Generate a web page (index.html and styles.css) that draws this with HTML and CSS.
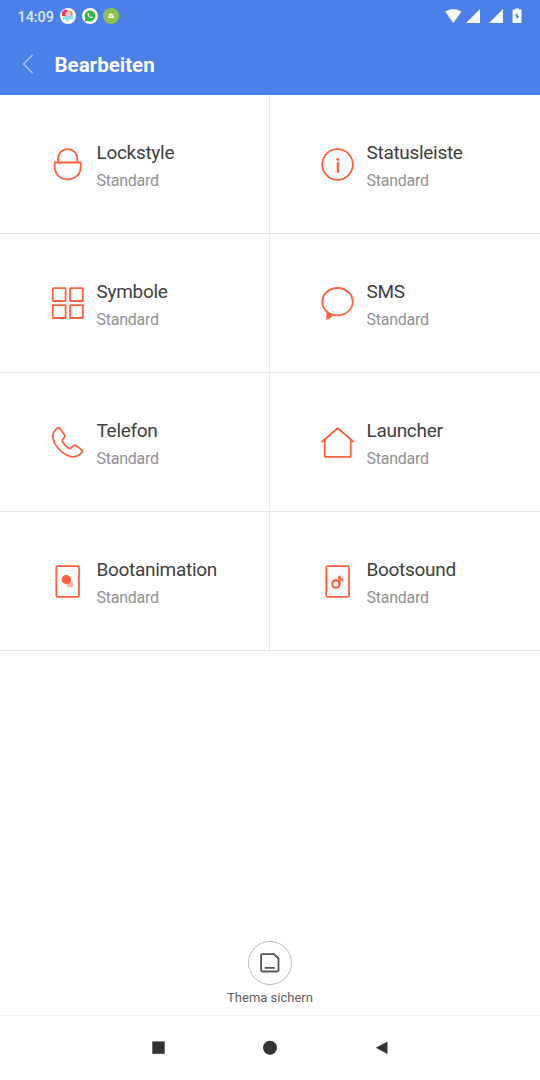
FILE: index.html
```html
<!DOCTYPE html>
<html lang="de">
<head>
  <meta charset="UTF-8" />
  <meta name="viewport" content="width=device-width, initial-scale=1.0"/>
  <title>Bearbeiten</title>
  <link rel="stylesheet" href="styles.css">
</head>
<body>
  <header>
    <div class="statusbar">
      <span class="time">14:09</span>
      <svg class="notif" viewBox="0 0 16 16">
        <circle cx="8" cy="8" r="8" fill="#fff"/>
        <path d="M2 3.500 5 1.500 8 2.200 5.500 8H2z" fill="#e8354f"/>
        <path d="M8 2.200 12 2.600 14 6.500 10 6z" fill="#f5dc9c"/>
        <path d="M6 3.500h6v4.500l-3 2-4-3z" fill="#ee8c8c"/>
        <path d="M3 9l3-1 3 1 4-3v5l-4 1-2 2-1-2.500H3z" fill="#7fe3ef"/>
        <circle cx="8" cy="6.200" r="2.400" fill="#f4cfcb"/>
      </svg>
      <svg class="notif" viewBox="0 0 16 16">
        <circle cx="8" cy="8" r="8" fill="#fff"/>
        <path d="M2.400 13.600l.9-3.100A5.400 5.400 0 1 1 5.500 12.700z" fill="#2db742"/>
        <path d="M6.100 5.100c-1.200 1-.3 2.700.9 3.900s2.800 2 3.800.8l.1-.7-1.500-.8-.8.7c-.8-.3-1.500-1-1.800-1.700l.6-.8-.7-1.500z" fill="#fff"/>
      </svg>
      <svg class="notif" viewBox="0 0 16 16">
        <circle cx="8" cy="8" r="8" fill="#8bc34a"/>
        <path d="M5.400 7.500a2.600 2 0 0 1 5.200 0zM5.200 8.200h5.600v1.700H5.200z" fill="#fff"/>
      </svg>
      <svg class="system" viewBox="0 0 78 16">
        <path d="M0 3.600Q8.300-1.500 16.600 3.600L8.300 15z"/>
        <path d="M35 1v14H21z"/>
        <path d="M58 1v14H44z"/>
        <path d="M68 1.500h2V.6h4v.9h2q.5 0 .5.500v12.500q0 .5-.5.500h-8q-.5 0-.5-.5V2q0-.5.500-.5z"/>
        <path d="M72.400 4.500l-2.700 4h1.900v3.300l2.700-4h-1.900z" fill="#4a80e8"/>
      </svg>
    </div>
    <div class="titlebar">
      <svg class="back" viewBox="0 0 12 20"><path d="M10.500 1 1.500 10l9 9"/></svg>
      <h1>Bearbeiten</h1>
    </div>
  </header>

  <main>
    <div class="item">
      <svg viewBox="0 0 35 35">
        <path d="M8 15.300v-3.500a9.700 9.700 0 0 1 19.400 0v3.500"/>
        <path d="M4.700 15.500h26v4.300c0 7.600-5.600 12.600-13 12.600s-13-5-13-12.600z"/>
      </svg>
      <div><h2>Lockstyle</h2><p>Standard</p></div>
    </div>
    <div class="item">
      <svg viewBox="0 0 35 35">
        <circle cx="17.500" cy="17.500" r="15.300"/>
        <circle class="solid" cx="17.800" cy="12.200" r="1.500"/>
        <path class="thick" d="M17.800 16V25"/>
      </svg>
      <div><h2>Statusleiste</h2><p>Standard</p></div>
    </div>
    <div class="item">
      <svg viewBox="0 0 35 35">
        <rect x="2.800" y="2.200" width="12.800" height="12.800" rx=".5"/>
        <rect x="20" y="2.200" width="12.800" height="12.800" rx=".5"/>
        <rect x="2.800" y="19.200" width="12.800" height="12.800" rx=".5"/>
        <rect x="20" y="19.200" width="12.800" height="12.800" rx=".5"/>
      </svg>
      <div><h2>Symbole</h2><p>Standard</p></div>
    </div>
    <div class="item">
      <svg viewBox="0 0 35 35">
        <ellipse cx="17.500" cy="15.700" rx="15.200" ry="13.700"/>
        <path class="solid" d="M6.300 25.500q.8 4.500-.4 8.700 4.500-1.200 7.300-4.700z"/>
      </svg>
      <div><h2>SMS</h2><p>Standard</p></div>
    </div>
    <div class="item">
      <svg viewBox="0 0 35 35">
        <path d="M7.600 2.900Q8.800 2.200 9.800 3.300L14.500 9.900Q15.300 11.200 14.500 12.300L12.500 14.600Q11.800 15.500 12.500 16.700 14.800 20.700 18.800 23.200 20 23.900 21 23L23.600 20.700Q24.800 19.900 26 20.600L31.900 24.900Q33 25.800 32.200 27 29.700 30.500 26 31.400 19.500 33.200 11.500 26.600 3 19 2.700 11.300 2.700 6.300 7.600 2.900z"/>
      </svg>
      <div><h2>Telefon</h2><p>Standard</p></div>
    </div>
    <div class="item">
      <svg viewBox="0 0 35 35">
        <path d="M2.200 16.500 17.700 3.300l15.500 13.200M4.700 14.500v17.300h26V14.500"/>
      </svg>
      <div><h2>Launcher</h2><p>Standard</p></div>
    </div>
    <div class="item">
      <svg viewBox="0 0 35 35">
        <rect x="6.300" y="2.200" width="22.700" height="30.700" rx="1.500"/>
        <circle class="solid pale" cx="20" cy="20.200" r="3.300"/>
        <circle class="solid" cx="16.300" cy="15.600" r="4.600"/>
      </svg>
      <div><h2>Bootanimation</h2><p>Standard</p></div>
    </div>
    <div class="item">
      <svg viewBox="0 0 35 35">
        <rect x="6.300" y="2.200" width="22.700" height="30.700" rx="1.500"/>
        <circle class="thick" cx="15.900" cy="20" r="3.700"/>
        <path class="thick" d="M19.300 20V12.800"/>
        <path class="solid" d="M18.600 11.700h1.500q.3 1.600 1.900 2.400 1.400.9 1.300 3.800-1.300-1.500-3.600-1.700z"/>
      </svg>
      <div><h2>Bootsound</h2><p>Standard</p></div>
    </div>
  </main>

  <footer>
    <div class="save">
      <svg viewBox="0 0 20 20">
        <path d="M2.300 1.200H14L18.500 5.500V17.300q0 1.200-1.200 1.200H2.300q-1.200 0-1.200-1.200V2.400q0-1.200 1.200-1.200zM4.800 14.800h10"/>
      </svg>
    </div>
    <span>Thema sichern</span>
  </footer>

  <nav>
    <svg viewBox="0 0 14 14"><path d="M1.300.400h12.400v12.400H1.300z"/></svg>
    <svg viewBox="0 0 14 14"><circle cx="7" cy="6.700" r="7"/></svg>
    <svg viewBox="0 0 14 14"><path d="M12.500.500v12.400L.8 6.700z"/></svg>
  </nav>
</body>
</html>
```
FILE: styles.css
```css
* { box-sizing: border-box; margin: 0; padding: 0; }
body {
  font-family: Roboto, sans-serif;
  background: #fff; color: #404040;
  height: 1080px;
  display: flex; flex-direction: column;
  overflow: hidden;
}
svg { display: block; flex: none; }

/* Blue header with status bar and title */
header { background: #4a80e8; height: 95px; color: #fff; }
.statusbar {
  display: flex; align-items: center;
  height: 32px; padding: 0 17px 0 17.5px;
}
.time {
  width: 42.8px; padding-top: 2px;
  font-size: 14.5px; font-weight: 500; letter-spacing: -0.1px; color: #dfe9fc;
}
.notif { width: 16px; height: 16px; margin-right: 5.5px; }
.system { width: 78px; height: 16px; margin-left: auto; fill: #f7faff; }
.titlebar { display: flex; align-items: center; height: 65px; padding-left: 22px; }
.back {
  width: 12px; height: 20px; margin-top: -1px;
  fill: none; stroke: #b4cbf7; stroke-width: 1.3;
}
h1 { font-size: 20.5px; font-weight: 700; margin-left: 20.5px; }

/* Two column grid of theme parts */
main { display: grid; grid-template-columns: 270px 270px; grid-auto-rows: 139px; }
.item {
  display: flex; align-items: flex-start;
  padding: 52px 0 0 50px;
  border-bottom: 1px solid #e6e6e6;
}
.item:nth-child(odd) { border-right: 1px solid #e6e6e6; }
.item svg {
  width: 35px; height: 35px; margin-right: 11.5px;
  fill: none; stroke: #ff6042; stroke-width: 1.8;
  stroke-linejoin: round; stroke-linecap: round;
}
.item .solid { fill: #ff6042; stroke: none; }
.item .pale { fill: #ffb3a5; }
.item .thick { stroke-width: 2.2; }
.item h2 {
  font-size: 19px; font-weight: 400; line-height: 24px;
  letter-spacing: -0.3px; margin-top: -6px;
}
.item p {
  font-size: 16px; line-height: 20px;
  letter-spacing: -0.25px; color: #929292; margin-top: 6px;
}

/* Save button */
footer {
  margin-top: auto;
  display: flex; flex-direction: column; align-items: center;
  height: 74px;
}
.save {
  width: 44px; height: 44px;
  display: flex; align-items: center; justify-content: center;
  border: 1px solid #bcbcbc; border-radius: 50%;
}
.save svg { width: 20px; height: 20px; fill: none; stroke: #555; stroke-width: 1.8; }
footer span { font-size: 13px; line-height: 16px; margin-top: 5px; color: #606060; }

/* Android navigation */
nav {
  display: flex; align-items: center; justify-content: center;
  gap: 98px; height: 65px; padding-bottom: 1px;
  border-top: 1px solid #f0f0f0;
}
nav svg { width: 14px; height: 14px; fill: #333; overflow: visible; }
```
